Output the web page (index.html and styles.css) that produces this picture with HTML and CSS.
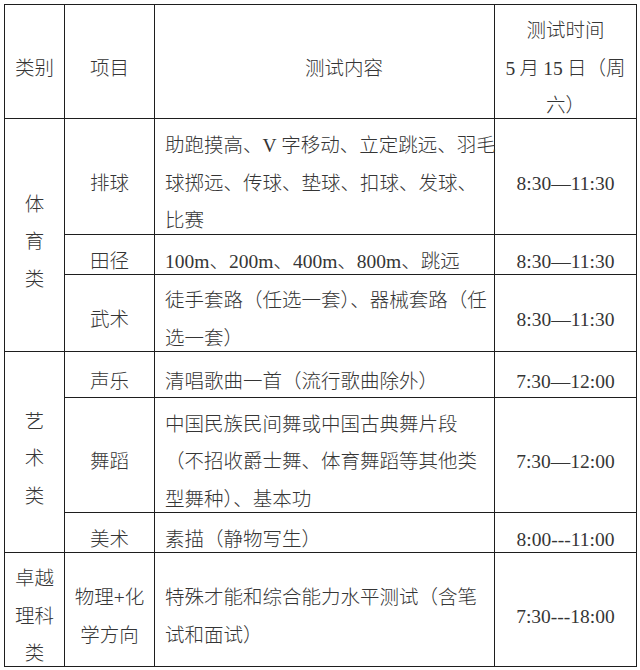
FILE: index.html
```html
<!DOCTYPE html>
<html lang="zh-CN">
<head>
<meta charset="utf-8">
<title>测试安排</title>
<link rel="stylesheet" href="styles.css">
</head>
<body>
<table class="grid">
  <colgroup>
    <col class="c1"><col class="c2"><col class="c3"><col class="c4">
  </colgroup>
  <tr class="r-head">
    <td class="ctr"><div class="in">类别</div></td>
    <td class="ctr"><div class="in">项目</div></td>
    <td class="head3"><div class="in">测试内容</div></td>
    <td class="ctr"><div class="in">测试时间<br><span class="lat">5</span> 月 <span class="lat">15</span> 日（周<br>六）</div></td>
  </tr>
  <tr class="r-pq">
    <td class="ctr" rowspan="3"><div class="in">体<br>育<br>类</div></td>
    <td class="ctr"><div class="in">排球</div></td>
    <td class="txt"><div class="in">助跑摸高、<span class="lat">V </span>字移动、立定跳远、羽毛<br>球掷远、传球、垫球、扣球、发球、<br>比赛</div></td>
    <td class="ctr"><div class="in"><span class="lat">8:30—11:30</span></div></td>
  </tr>
  <tr class="r-tj">
    <td class="ctr"><div class="in">田径</div></td>
    <td class="txt"><div class="in"><span class="lat">100m</span>、<span class="lat">200m</span>、<span class="lat">400m</span>、<span class="lat">800m</span>、跳远</div></td>
    <td class="ctr"><div class="in"><span class="lat">8:30—11:30</span></div></td>
  </tr>
  <tr class="r-ws">
    <td class="ctr"><div class="in">武术</div></td>
    <td class="txt"><div class="in">徒手套路（任选一套）、器械套路（任<br>选一套）</div></td>
    <td class="ctr"><div class="in"><span class="lat">8:30—11:30</span></div></td>
  </tr>
  <tr class="r-sy">
    <td class="ctr" rowspan="3"><div class="in">艺<br>术<br>类</div></td>
    <td class="ctr"><div class="in">声乐</div></td>
    <td class="txt"><div class="in">清唱歌曲一首（流行歌曲除外）</div></td>
    <td class="ctr"><div class="in"><span class="lat">7:30—12:00</span></div></td>
  </tr>
  <tr class="r-wd">
    <td class="ctr"><div class="in">舞蹈</div></td>
    <td class="txt"><div class="in">中国民族民间舞或中国古典舞片段<br>（不招收爵士舞、体育舞蹈等其他类<br>型舞种）、基本功</div></td>
    <td class="ctr"><div class="in"><span class="lat">7:30—12:00</span></div></td>
  </tr>
  <tr class="r-ms">
    <td class="ctr"><div class="in">美术</div></td>
    <td class="txt"><div class="in">素描（静物写生）</div></td>
    <td class="ctr"><div class="in"><span class="lat">8:00---11:00</span></div></td>
  </tr>
  <tr class="r-zy">
    <td class="ctr"><div class="in">卓越<br>理科<br>类</div></td>
    <td class="ctr"><div class="in">物理<span class="lat">+</span>化<br>学方向</div></td>
    <td class="txt"><div class="in">特殊才能和综合能力水平测试（含笔<br>试和面试）</div></td>
    <td class="ctr"><div class="in"><span class="lat">7:30---18:00</span></div></td>
  </tr>
</table>
</body>
</html>
```

FILE: styles.css
```css
html, body {
  margin: 0;
  padding: 0;
  background: #ffffff;
}

body {
  padding: 4px 0 0 4px;
  font-family: "Noto Sans CJK SC", "Noto Sans CJK JP", sans-serif;
  font-size: 19.5px;
  font-weight: 300;
  color: #353535;
}

.lat {
  font-family: "Liberation Serif", "Times New Roman", serif;
  font-weight: 400;
  line-height: 1;
}

.grid {
  border-collapse: collapse;
  table-layout: fixed;
  width: 632px;
}

.c1 { width: 60px; }
.c2 { width: 90px; }
.c3 { width: 340px; }
.c4 { width: 142px; }

.grid td {
  border: 1px solid #1e1e1e;
  padding: 0 8px;
  vertical-align: middle;
  line-height: 37.6px;
  white-space: nowrap;
  overflow: visible;
}

.grid .in {
  margin: 5px 0 -5px;
}

.ctr { text-align: center; }

.grid td.txt {
  text-align: left;
  padding-left: 10px;
}

.grid td.head3 {
  text-align: left;
  padding-left: 150px;
}

.r-head { height: 114px; }
.r-pq { height: 116px; }
.r-tj { height: 40px; }
.r-ws { height: 77px; }
.r-sy { height: 46px; }
.r-wd { height: 115px; }
.r-ms { height: 40px; }
.r-zy { height: 114px; }
```
